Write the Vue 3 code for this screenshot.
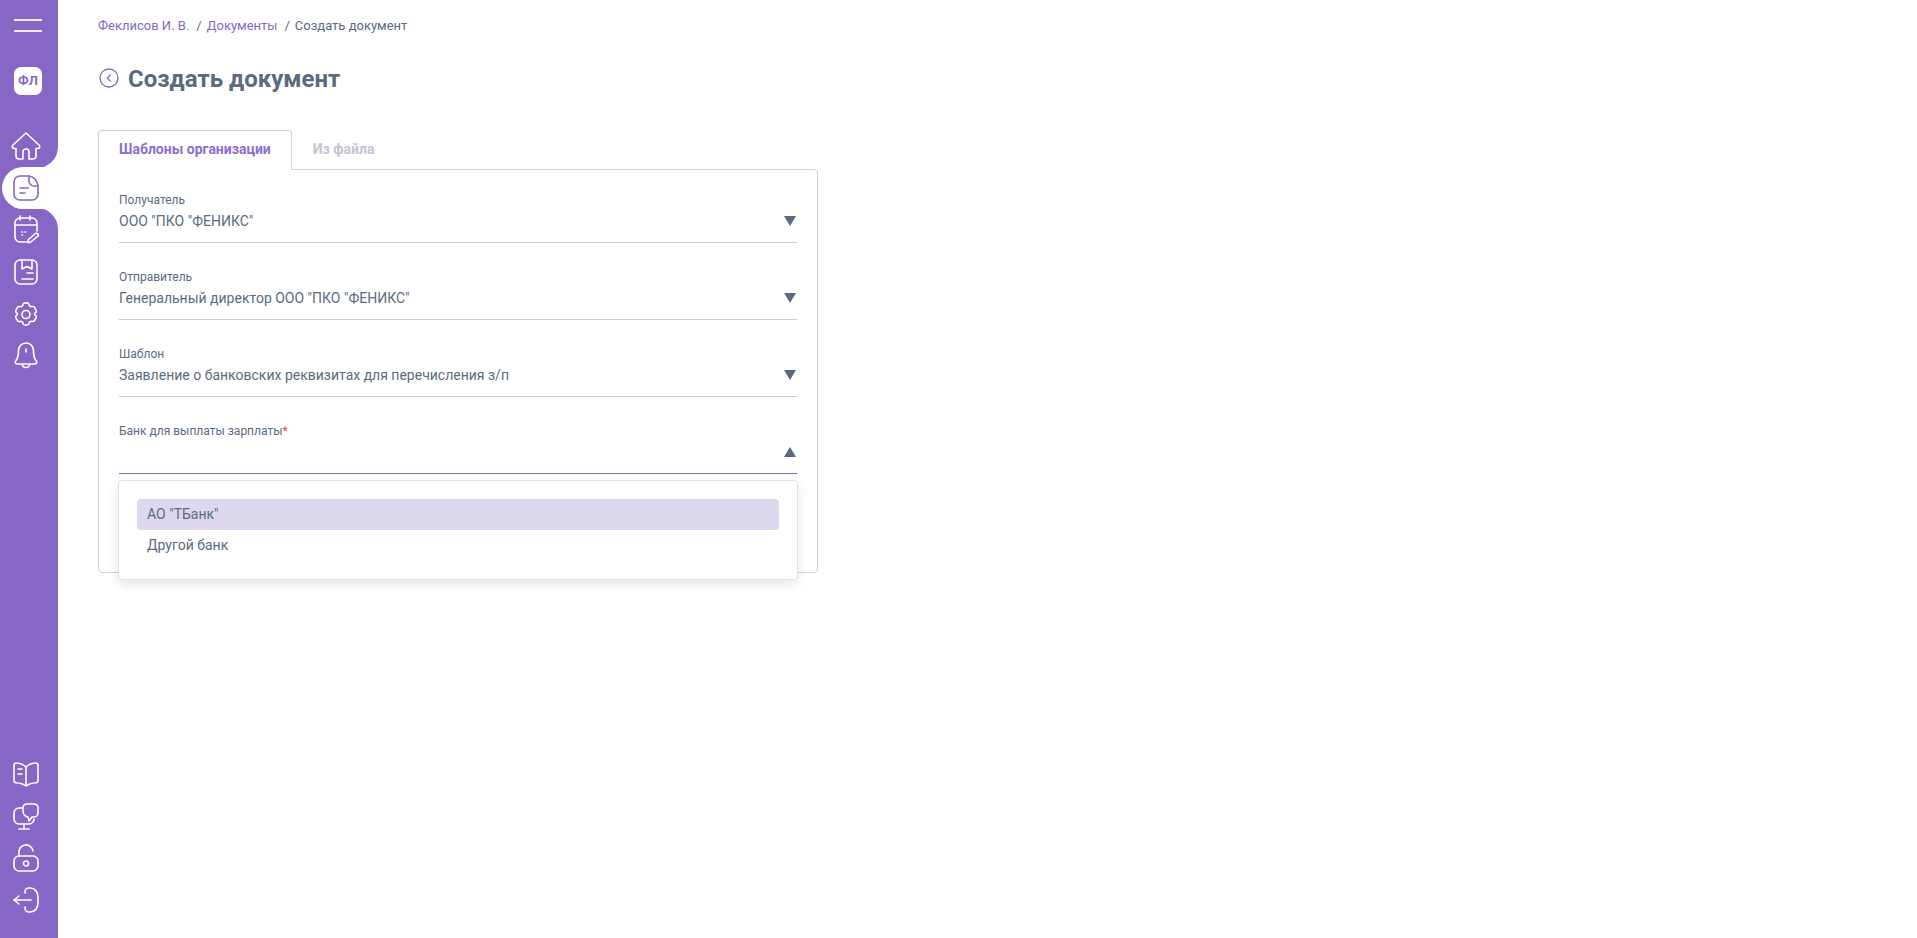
<template>
  <div class="page">
    <!-- sidebar -->
    <aside class="sidebar">
      <div class="burger"><i></i><i></i></div>
      <div class="avatar">ФЛ</div>
      <nav class="nav">
        <a v-for="item in topNav" :key="item.name" class="nav-item" :class="{ active: item.active, before: item.before, after: item.after, raise: item.raise }">
          <svg width="30" height="30" viewBox="0 0 30 30" fill="none" stroke="currentColor" stroke-width="1.6" stroke-linecap="round" stroke-linejoin="round">
            <path v-for="d in item.paths" :key="d" :d="d" />
          </svg>
        </a>
      </nav>
      <nav class="nav bottom">
        <a v-for="item in bottomNav" :key="item.name" class="nav-item">
          <svg width="30" height="30" viewBox="0 0 30 30" fill="none" stroke="currentColor" stroke-width="1.6" stroke-linecap="round" stroke-linejoin="round">
            <path v-for="d in item.paths" :key="d" :d="d" />
          </svg>
        </a>
      </nav>
    </aside>

    <!-- content -->
    <main class="main">
      <div class="crumbs">
        <a>Феклисов И. В.</a><span class="sep">/</span>
        <a>Документы</a><span class="sep">/</span>
        <span>Создать документ</span>
      </div>

      <div class="title-row">
        <svg width="20" height="20" viewBox="0 0 20 20" fill="none" stroke="#8767c5" stroke-width="1.3" stroke-linecap="round" stroke-linejoin="round">
          <circle cx="10" cy="10" r="9" />
          <path d="M11.3 7 8.3 10l3 3" />
        </svg>
        <h1>Создать документ</h1>
      </div>

      <div class="tabs">
        <button class="tab active">Шаблоны организации</button>
        <button class="tab">Из файла</button>
      </div>

      <div class="card">
        <div v-for="f in fields" :key="f.label" class="field" :class="{ open: f.open }">
          <div class="label">{{ f.label }}<span v-if="f.required" class="req">*</span></div>
          <div class="value">
            <span>{{ f.value }}</span>
            <i class="arrow" :class="{ up: f.open }"></i>
          </div>
        </div>

        <div class="dropdown">
          <div v-for="(o, i) in options" :key="o" class="option" :class="{ selected: i === 0 }">{{ o }}</div>
        </div>
      </div>
    </main>
  </div>
</template>

<script setup>
const topNav = [
  { name: 'home', before: true, paths: ['M15 2 2 14c-1.5 1.500-.5 3.500 1.500 3.500H5V25a3 3 0 0 0 3 3h4v-7a3 3 0 0 1 6 0v7h4a3 3 0 0 0 3-3v-7.500h1.500c2 0 3-2 1.500-3.500L15 2Z'] },
  { name: 'docs', active: true, raise: true, paths: ['M18 4H9a6 6 0 0 0-6 6v12a6 6 0 0 0 6 6h12a6 6 0 0 0 6-6v-8', 'M18 4c5 1 8 4 9 10h-4a5 5 0 0 1-5-5V4Z', 'M9 16h8', 'M9 21h5'] },
  { name: 'calendar', after: true, raise: true, paths: ['M16 28H9a5 5 0 0 1-5-5V9a5 5 0 0 1 5-5h12a5 5 0 0 1 5 5v8', 'M4 11h22', 'M9 2v4', 'M19 2v4', 'M11 18h.5', 'M14 18h.5', 'M11 21h.5', 'M19 28.500l7.500-6a1.500 1.500 0 0 0-2-3l-7 6-.5 3Z'] },
  { name: 'box', raise: true, paths: ['M9 4h12a5 5 0 0 1 5 5v14a5 5 0 0 1-5 5H9a5 5 0 0 1-5-5V9a5 5 0 0 1 5-5Z', 'M11 4v9l5-2.500 5 2.500V4', 'M16 17h6', 'M11 23h11'] },
  { name: 'settings', paths: ['M15 11.500a4 4 0 1 0 0 8 4 4 0 0 0 0-8Z', 'M12.500 4.500c1-.8 4-.8 5 0 .7.600.4 2.200 1.600 2.900s2.600-.4 3.600.2c1 .7 3 4 2.600 5.200-.3.900-1.800 1-1.800 2.200s1.500 1.300 1.800 2.200c.4 1.200-1.600 4.500-2.600 5.200-1 .6-2.400-.5-3.600.2s-.9 2.300-1.600 2.900c-1 .8-4 .8-5 0-.7-.6-.4-2.200-1.600-2.900s-2.600.4-3.600-.2c-1-.7-3-4-2.600-5.200.3-.9 1.800-1 1.800-2.200s-1.500-1.300-1.800-2.200c-.4-1.200 1.600-4.500 2.600-5.200 1-.6 2.400.5 3.600-.2s.9-2.300 1.600-2.900Z'] },
  { name: 'bell', paths: ['M15 2c-4.500 0-7.500 3.500-7.500 8 0 4-.5 7-2.500 9.500-1.500 1.500-1 3.500 1.500 3.500h17c2.500 0 3-2 1.500-3.500-2-2.500-2.500-5.500-2.500-9.500 0-4.500-3-8-7.500-8Z', 'M15 8v3', 'M11.500 23.500a3.500 3 0 0 0 7 0'] }
]

const bottomNav = [
  { name: 'book', paths: ['M15 8c-3-3-7-4-10-4-1.500 0-2 1-2 2.500v15c0 1.500.5 2 2 2.200 4 .3 7.500 1.300 10 3.300 2.500-2 6-3 10-3.300 1.500-.2 2-.7 2-2.200v-15C27 5 26.500 4 25 4c-3 0-7 1-10 4Z', 'M15 8v18', 'M7 10h4', 'M7 15h4'] },
  { name: 'screen', paths: ['M11 7H8a5 5 0 0 0-5 5v6a5 5 0 0 0 5 5h10a5 5 0 0 0 5-5', 'M13 23v4', 'M8 28h10', 'M16 3h7a4 4 0 0 1 4 4v5a4 4 0 0 1-4 4h-2l-3 4-1-4a6 6 0 0 1-5-6V7a4 4 0 0 1 4-4Z'] },
  { name: 'lock', paths: ['M8 13h14a5 5 0 0 1 5 5v5a5 5 0 0 1-5 5H8a5 5 0 0 1-5-5v-5a5 5 0 0 1 5-5Z', 'M8 13V10a7 7 0 0 1 14-2', 'M15 18a2.500 2.500 0 1 0 0 5 2.500 2.500 0 0 0 0-5Z'] },
  { name: 'logout', paths: ['M14 8V7a4 4 0 0 1 4-4h1c5 0 8 4 8 9v6c0 5-3 9-8 9h-1a4 4 0 0 1-4-4v-1', 'M3 15h17', 'M8 11l-5 4 5 4'] }
]

const fields = [
  { label: 'Получатель', value: 'ООО "ПКО "ФЕНИКС"' },
  { label: 'Отправитель', value: 'Генеральный директор ООО "ПКО "ФЕНИКС"' },
  { label: 'Шаблон', value: 'Заявление о банковских реквизитах для перечисления з/п' },
  { label: 'Банк для выплаты зарплаты', value: '', required: true, open: true }
]

const options = ['АО "ТБанк"', 'Другой банк']
</script>

<style>
html,
body {
  margin: 0;
  background: #fff;
}
</style>

<style scoped>
.page {
  display: flex;
  height: 938px;
  font-family: Roboto, "Liberation Sans", sans-serif;
  color: #5a6b80;
  overflow: hidden;
}

.sidebar {
  width: 58px;
  flex: 0 0 58px;
  background: #8767c5;
  display: flex;
  flex-direction: column;
  color: #fff;
}

.burger {
  display: flex;
  flex-direction: column;
  gap: 9px;
  padding: 19px 0 0 14px;
}

.burger i {
  display: block;
  width: 28px;
  height: 2px;
  background: #f1edf9;
}

.avatar {
  width: 28px;
  height: 28px;
  margin: 35px 0 0 14px;
  background: #fff;
  border-radius: 7px;
  color: #8767c5;
  font-size: 13px;
  font-weight: 700;
  line-height: 28px;
  text-align: center;
}

.nav {
  display: flex;
  flex-direction: column;
  margin-top: 30px;
}

.nav.bottom {
  margin-top: auto;
  padding-bottom: 17px;
}

.nav-item {
  position: relative;
  height: 42px;
  display: flex;
  align-items: center;
  justify-content: center;
  padding-right: 6px;
  box-sizing: border-box;
}

.nav-item svg {
  position: relative;
  z-index: 1;
}

.nav-item.raise svg {
  margin-bottom: 2px;
}

.nav-item.active {
  margin-left: 2px;
  padding-right: 8px;
  background: #fff;
  color: #8767c5;
  border-radius: 21px 0 0 21px;
}

.nav-item.before::after,
.nav-item.after::after {
  content: "";
  position: absolute;
  right: 0;
  width: 21px;
  height: 21px;
  background: #fff;
}

.nav-item.before::after {
  bottom: -1px;
  clip-path: path("M21 0V21H0A21 21 0 0 0 21 0Z");
}

.nav-item.after::after {
  top: -1px;
  clip-path: path("M0 0H21V21A21 21 0 0 0 0 0Z");
}

.main {
  flex: 1;
  padding: 18px 0 0 40px;
}

.crumbs {
  font-size: 13px;
  line-height: 15px;
  color: #5a6b80;
}

.crumbs a {
  color: #8767c5;
}

.crumbs .sep {
  margin: 0 5px 0 7px;
}

.title-row {
  display: flex;
  align-items: center;
  gap: 9px;
  margin-top: 29px;
  height: 34px;
}

.title-row svg {
  margin: 0 0 2px 1px;
}

.title-row h1 {
  margin: 0;
  font-size: 24px;
  line-height: 34px;
  font-weight: 700;
  color: #5a6b80;
}

.tabs {
  display: flex;
  margin-top: 34px;
  position: relative;
  z-index: 1;
}

.tab {
  height: 40px;
  padding: 0 20px 4px;
  border: 1px solid transparent;
  border-bottom: none;
  background: transparent;
  font: 700 14px Roboto, "Liberation Sans", sans-serif;
  color: #c4c4d4;
  border-radius: 4px 4px 0 0;
}

.tab.active {
  background: #fff;
  color: #8e6dd0;
  border-color: #cdd2da;
}

.card {
  position: relative;
  width: 720px;
  height: 404px;
  margin-top: -1px;
  padding: 22px 20px 0;
  box-sizing: border-box;
  border: 1px solid #cdd2da;
  border-radius: 0 4px 4px 4px;
}

.field {
  height: 77px;
}

.label {
  font-size: 12px;
  line-height: 16px;
  color: #5a6b80;
}

.req {
  color: #f0404f;
}

.value {
  display: flex;
  align-items: center;
  justify-content: space-between;
  height: 35px;
  padding: 0 1px 8px 0;
  box-sizing: border-box;
  font-size: 14px;
  color: #5a6b80;
  border-bottom: 1px solid #c8ccd4;
}

.field.open .value {
  border-bottom-color: #8767c5;
}

.arrow {
  width: 0;
  height: 0;
  border-left: 6px solid transparent;
  border-right: 6px solid transparent;
  border-top: 10px solid #5a6b80;
}

.arrow.up {
  border-top: none;
  border-bottom: 10px solid #5a6b80;
}

.dropdown {
  position: absolute;
  left: 19px;
  top: 310px;
  width: 680px;
  height: 100px;
  padding: 18px 18px 0;
  box-sizing: border-box;
  background: #fff;
  border: 1px solid #e2e2e6;
  border-radius: 4px;
  box-shadow: 0 4px 12px rgba(0, 0, 0, 0.1);
}

.option {
  height: 31px;
  line-height: 31px;
  padding: 0 10px;
  font-size: 14px;
  border-radius: 4px;
  color: #5a6b80;
}

.option.selected {
  background: #ddd8ee;
}
</style>
